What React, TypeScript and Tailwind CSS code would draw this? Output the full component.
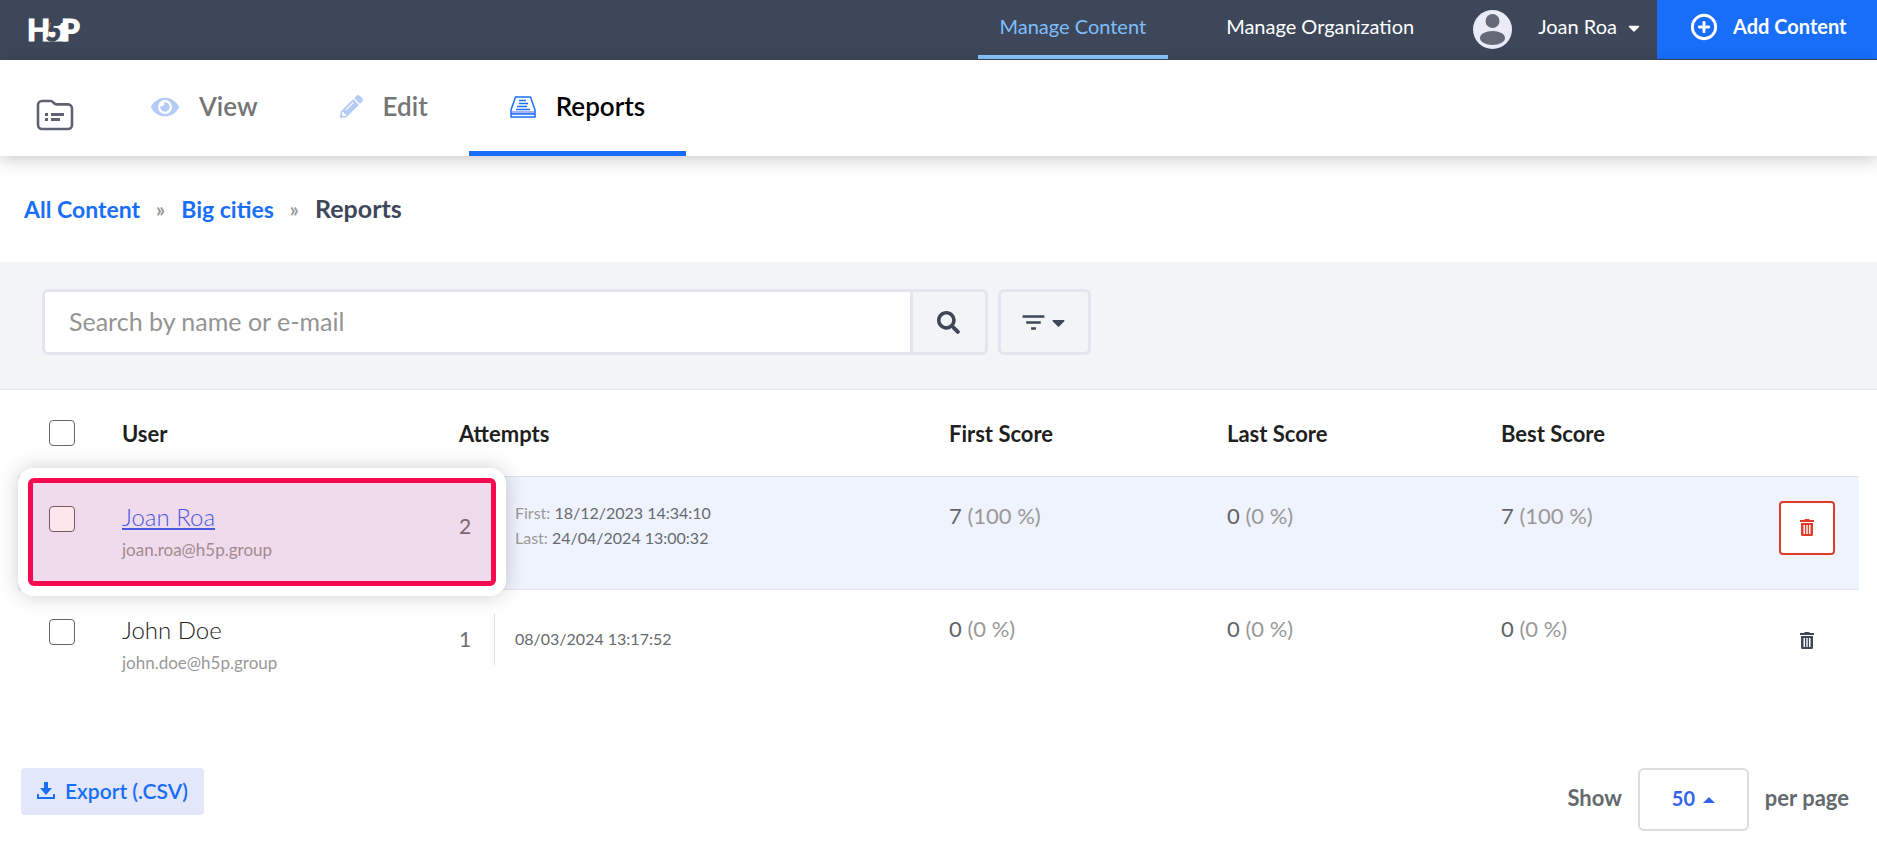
import React, { useState } from 'react';
import { FaEye, FaPencilAlt, FaSearch, FaCaretDown } from 'react-icons/fa';
import { MdFilterList } from 'react-icons/md';
import { CirclePlus } from 'lucide-react';

interface Attempt {
  label?: string;
  date: string;
}

interface Score {
  points: number;
  percent: number;
}

interface UserRow {
  id: string;
  name: string;
  email: string;
  attempts: number;
  dates: Attempt[];
  scores: Score[];
  active?: boolean;
}

const rows: UserRow[] = [
  {
    id: 'joan',
    name: 'Joan Roa',
    email: 'joan.roa@h5p.group',
    attempts: 2,
    dates: [
      { label: 'First:', date: '18/12/2023 14:34:10' },
      { label: 'Last:', date: '24/04/2024 13:00:32' },
    ],
    scores: [
      { points: 7, percent: 100 },
      { points: 0, percent: 0 },
      { points: 7, percent: 100 },
    ],
    active: true,
  },
  {
    id: 'john',
    name: 'John Doe',
    email: 'john.doe@h5p.group',
    attempts: 1,
    dates: [{ date: '08/03/2024 13:17:52' }],
    scores: [
      { points: 0, percent: 0 },
      { points: 0, percent: 0 },
      { points: 0, percent: 0 },
    ],
  },
];

const Logo: React.FC = () => (
  <svg width="64" height="48" viewBox="0 0 64 48" role="img" aria-label="H5P">
    <g fontFamily="Lato, sans-serif" fontWeight="900">
      <text x="3" y="35" fontSize="30" fill="#fff" stroke="#fff" strokeWidth="1">H</text>
      <path d="M26 17h16v18.500H24z" fill="#fff" />
      <text x="37" y="35" fontSize="30" fill="#fff" stroke="#fff" strokeWidth="1">P</text>
      <text x="22" y="35" fontSize="27" fontStyle="italic" fill="#3d4759" stroke="#3d4759" strokeWidth="1">5</text>
    </g>
  </svg>
);

const FolderIcon: React.FC = () => (
  <svg width="38" height="32" viewBox="0 0 38 32" fill="none">
    <path
      d="M6 2h8.500c1.500 0 2.200.6 3.200 1.800S19.500 5.400 21 5.400h11a4 4 0 0 1 4 4V26a4 4 0 0 1-4 4H6a4 4 0 0 1-4-4V6a4 4 0 0 1 4-4Z"
      stroke="#5f6270"
      strokeWidth="2.600"
    />
    <path d="M9 14h3v3H9zM15 14h13v3H15zM9 19h3v3H9zM15 19h9v3h-9z" fill="#5f6270" />
  </svg>
);

const TrayIcon: React.FC = () => (
  <svg width="26" height="22" viewBox="0 0 26 22" fill="none">
    <path d="M1 15h24v3H1z" fill="#a9b3fa" />
    <path d="M5.500 1h15L25 14v7H1v-7L5.500 1ZM1 18h24" stroke="#1a6ffb" strokeWidth="1.500" />
    <path d="M9 4.500h7M9 7.500h9M7 10.500h10M6 13.500h14" stroke="#1a6ffb" strokeWidth="1.500" />
  </svg>
);

const TrashIcon: React.FC = () => (
  <svg width="14" height="18" viewBox="0 0 14 18" fill="currentColor">
    <path d="M4.500 0h5v1H14v2H0V1h4.500z" />
    <path
      fillRule="evenodd"
      d="M1 4h12v11.500a1.500 1.500 0 0 1-1.500 1.500h-9A1.500 1.500 0 0 1 1 15.500V4Zm2.500 2v9H5V6H3.500Zm2.800 0v9h1.400V6H6.300ZM9 6v9h1.500V6H9Z"
    />
  </svg>
);

const DownloadIcon: React.FC = () => (
  <svg width="18" height="18" viewBox="0 0 18 18" fill="currentColor">
    <path d="M7 0h4v6h4l-6 7-6-7h4zM0 12h2v3h14v-3h2v5H0z" />
  </svg>
);

const Avatar: React.FC = () => (
  <svg width="39" height="39" viewBox="0 0 39 39">
    <circle cx="19.500" cy="19.500" r="19.500" fill="#e9ebf7" />
    <circle cx="19.500" cy="11" r="7" fill="#656976" />
    <ellipse cx="19.500" cy="28" rx="12.500" ry="7" fill="#656976" />
  </svg>
);

const tabs = [
  { label: 'View', icon: <FaEye className="w-7 h-7 text-[#b3cbf5]" /> },
  { label: 'Edit', icon: <FaPencilAlt className="w-[23px] h-[23px] text-[#b3cbf5]" /> },
  { label: 'Reports', icon: <TrayIcon />, active: true },
];

const checkboxClass =
  'block w-[26px] h-[26px] appearance-none rounded border border-[#666] bg-white checked:bg-[#186ef9]';

const App: React.FC = () => {
  const [query, setQuery] = useState('');
  const [pageSize, setPageSize] = useState('50');

  return (
    <div className="min-w-[1200px] bg-white font-[Lato,sans-serif] text-[#3d4759]">
      <header className="flex h-[60px] items-start bg-[#3d4759] text-xl leading-6 text-white">
        <a href="#" className="ml-6 mt-[6px]">
          <Logo />
        </a>
        <nav className="ml-auto flex h-[59px] gap-9">
          <a href="#" className="border-b-4 border-[#8ac4ff] px-[22px] pt-[14px] text-[#7fbefb]">Manage Content</a>
          <a href="#" className="px-[22px] pt-[14px]">Manage Organization</a>
        </nav>
        <button type="button" className="ml-[37px] flex h-[59px] pr-[14px]">
          <span className="mt-[10px]">
            <Avatar />
          </span>
          <span className="ml-[26px] mt-[14px]">Joan Roa</span>
          <FaCaretDown className="ml-2 mt-[19px] h-[18px] w-[18px]" />
        </button>
        <button type="button" className="flex h-[59px] w-[220px] bg-[#186ef9] pl-[33px] font-bold">
          <CirclePlus className="mt-[13px] h-7 w-7" strokeWidth={2.5} />
          <span className="ml-[15px] mt-[14px]">Add Content</span>
        </button>
      </header>

      <nav className="relative flex h-24 shadow-[0_4px_16px_rgba(0,0,0,0.2)]">
        <a href="#" aria-label="Content" className="ml-9 mr-9 mt-[39px]">
          <FolderIcon />
        </a>
        {tabs.map((tab) => (
          <a
            key={tab.label}
            href="#"
            className={`flex items-center gap-5 border-b-[5px] px-[41px] pt-[2px] text-[26px] font-semibold ${tab.active
              ? 'border-[#186ef9] text-black'
              : 'border-transparent text-[#757575]'
              }`}
          >
            {tab.icon}
            {tab.label}
          </a>
        ))}
      </nav>

      <nav aria-label="Breadcrumb" className="flex h-[106px] items-center gap-4 px-6 text-[23px] font-bold text-[#186ef9]">
        <a href="#">All Content</a>
        <span className="text-xl text-[#999]">»</span>
        <a href="#">Big cities</a>
        <span className="text-xl text-[#999]">»</span>
        <span className="text-[25px] text-[#3d4759]">Reports</span>
      </nav>

      <section className="h-32 border-b border-[#e2e4ee] bg-[#f3f4f6] pl-[42px] pt-[27px]">
        <form className="flex h-[66px] w-4/7" onSubmit={(e) => e.preventDefault()}>
          <input
            type="text"
            aria-label="Search by name or e-mail"
            placeholder="Search by name or e-mail"
            value={query}
            onChange={(e) => setQuery(e.target.value)}
            className="min-w-0 flex-1 rounded-l-md border-[3px] border-r-0 border-[#e3e4ef] bg-white px-6 text-[25px] placeholder:text-[#949494]"
          />
          <button type="submit" aria-label="Search" className="flex w-[78px] items-center justify-center rounded-r-md border-[3px] border-[#e3e4ef]">
            <FaSearch className="h-[23px] w-[23px]" />
          </button>
          <button type="button" aria-label="Filter" className="ml-[10px] flex w-[93px] items-center justify-center rounded-md border-[3px] border-[#e3e4ef]">
            <MdFilterList className="h-[29px] w-[29px]" />
            <FaCaretDown className="h-[21px] w-[21px]" />
          </button>
        </form>
      </section>

      <main className="px-[18px]">
        <table className="w-full table-fixed border-collapse text-left">
          <colgroup>
            <col className="w-[104px]" />
            <col className="w-[337px]" />
            <col />
            <col className="w-[278px]" />
            <col className="w-[274px]" />
            <col className="w-[278px]" />
            <col className="w-20" />
          </colgroup>
          <thead>
            <tr className="h-[86px] text-[22px] text-[#1f1f1f]">
              <th className="pl-[31px]">
                <input type="checkbox" aria-label="Select all users" className={checkboxClass} />
              </th>
              <th className="pt-[2px] font-bold">User</th>
              <th className="pt-[2px] font-bold">Attempts</th>
              <th className="pt-[2px] font-bold">First Score</th>
              <th className="pt-[2px] font-bold">Last Score</th>
              <th className="pt-[2px] font-bold">Best Score</th>
              <th />
            </tr>
          </thead>
          <tbody>
            {rows.map((row) => (
              <tr
                key={row.id}
                className={`h-[113px] align-top ${row.active ? 'border-y border-[#e0e3ee] bg-[#eff3fe]' : ''}`}
              >
                <td className="relative pl-[31px] pt-[29px]">
                  <input type="checkbox" aria-label={`Select ${row.name}`} className={checkboxClass} />
                  {row.active && (
                    <div className="pointer-events-none absolute -top-[9px] left-0 z-10 h-[128px] w-[488px] rounded-2xl border-[10px] border-white shadow-[0_0_20px_rgba(0,0,0,0.2)]">
                      <div className="h-full rounded-md border-[5px] border-[#f50a50] bg-[#f50a50]/10" />
                    </div>
                  )}
                </td>
                <td className="pt-6 font-light">
                  <a href="#" className={`block text-2xl ${row.active ? 'text-[#3563f0] underline' : 'text-[#222]'}`}>
                    {row.name}
                  </a>
                  <span className="block text-[17px] font-normal leading-[34px] text-[#999]">{row.email}</span>
                </td>
                <td className="pt-[23px]">
                  <div className="flex h-[52px] items-center">
                    <span className="w-[35px] text-[21px] text-[#6b6f74]">{row.attempts}</span>
                    <div
                      className={`flex h-full flex-col border-l border-[#e0e3ee] pl-5 text-base leading-[25px] text-[#666a6e] ${row.dates.length > 1 ? 'justify-start' : 'justify-center'
                        }`}
                    >
                      {row.dates.map((d) => (
                        <span key={d.date}>
                          {d.label && <span className="text-[#999]">{d.label} </span>}
                          {d.date}
                        </span>
                      ))}
                    </div>
                  </div>
                </td>
                {row.scores.map((s, i) => (
                  <td key={i} className="pt-[23px] text-[22px] leading-8 text-[#5f6368]">
                    {s.points} <span className="text-[#999]">({s.percent} %)</span>
                  </td>
                ))}
                <td className="pt-6">
                  <button
                    type="button"
                    aria-label={`Delete results of ${row.name}`}
                    className={`flex h-[54px] w-14 items-center justify-center rounded border-2 ${row.active
                      ? 'border-[#e23c28] bg-white text-[#e23c28]'
                      : 'border-transparent'
                      }`}
                  >
                    <TrashIcon />
                  </button>
                </td>
              </tr>
            ))}
          </tbody>
        </table>
      </main>

      <footer className="flex items-start justify-between pl-[21px] pr-7 pt-[66px]">
        <button type="button" className="flex h-[47px] items-center gap-[10px] rounded bg-[#e3e7fa] px-4 pb-[2px] text-[21px] font-semibold text-[#186ef9]">
          <DownloadIcon />
          Export (.CSV)
        </button>
        <div className="flex items-center gap-4 text-[22px] font-bold text-[#63696d]">
          <label htmlFor="page-size" className="pb-1">Show</label>
          <div className="relative">
            <select
              id="page-size"
              value={pageSize}
              onChange={(e) => setPageSize(e.target.value)}
              className="block h-[63px] w-[111px] appearance-none rounded-md border-2 border-[#dcdcdc] bg-white pb-1 pl-8 text-xl text-[#3563f0]"
            >
              <option>10</option>
              <option>25</option>
              <option>50</option>
            </select>
            <svg className="pointer-events-none absolute right-[34px] top-[29px]" width="12" height="6" viewBox="0 0 12 6">
              <path d="M6 0l6 6H0z" fill="#3563f0" />
            </svg>
          </div>
          <span className="pb-1">per page</span>
        </div>
      </footer>
    </div>
  );
};

export default App;
